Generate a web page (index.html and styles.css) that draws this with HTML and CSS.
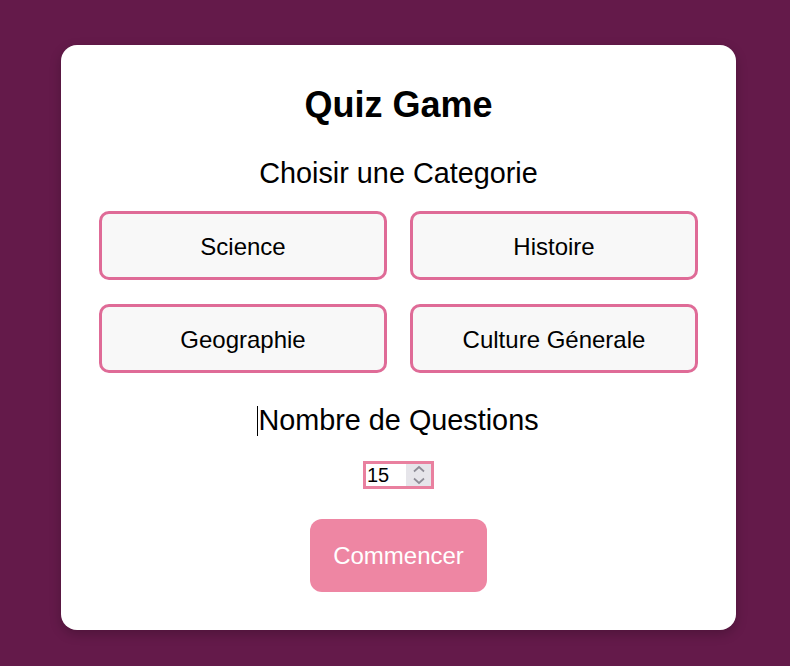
FILE: index.html
```html
<!DOCTYPE html>
<html lang="fr">
<head>
<meta charset="utf-8">
<title>Quiz Game</title>
<link rel="stylesheet" href="styles.css">
</head>
<body>
<main class="card">
  <h1 class="title">Quiz Game</h1>
  <h2 class="subtitle">Choisir une Categorie</h2>
  <div class="categories">
    <button class="cat">Science</button>
    <button class="cat">Histoire</button>
    <button class="cat">Geographie</button>
    <button class="cat">Culture Génerale</button>
  </div>
  <h2 class="subtitle subtitle-q"><span class="caret"></span>Nombre de Questions</h2>
  <div class="count-row">
    <div class="count-box">
      <input class="count" type="number" value="15" min="1" max="50">
      <div class="spin" aria-hidden="true">
        <svg width="14" height="22" viewBox="0 0 14 22">
          <path d="M2 7.5 L7 3 L12 7.5" fill="none" stroke="#8e8c96" stroke-width="1.7"/>
          <path d="M2 14.5 L7 19 L12 14.5" fill="none" stroke="#8e8c96" stroke-width="1.7"/>
        </svg>
      </div>
    </div>
  </div>
  <div class="start-row">
    <button class="start">Commencer</button>
  </div>
</main>
</body>
</html>
```

FILE: styles.css
```css
* { box-sizing: border-box; }
html, body { height: 100%; }
body {
  margin: 0;
  background: #641a4a;
  font-family: "Liberation Sans", Arial, sans-serif;
  display: flex;
  justify-content: center;
  align-items: flex-start;
  padding: 45px 0 0 7px;
}
.card {
  width: 675px;
  background: #ffffff;
  border-radius: 16px;
  padding: 39px 38px 38px;
  box-shadow: 0 4px 12px rgba(0, 0, 0, 0.22);
  display: flex;
  flex-direction: column;
  align-items: stretch;
}
.title {
  margin: 0;
  font-size: 36px;
  line-height: 41px;
  font-weight: bold;
  text-align: center;
  color: #000;
}
.subtitle {
  margin: 32px 0 0;
  font-size: 28.8px;
  line-height: 32px;
  font-weight: normal;
  text-align: center;
  color: #000;
}
.categories {
  margin-top: 22px;
  display: grid;
  grid-template-columns: 1fr 1fr;
  column-gap: 23px;
  row-gap: 24px;
}
.cat {
  height: 69px;
  background: #f8f8f8;
  border: 3px solid #df6b97;
  border-radius: 10px;
  font-family: "Liberation Sans", Arial, sans-serif;
  font-size: 24px;
  color: #000;
  padding: 2px 0 0;
}
.subtitle-q { margin-top: 31px; }
.caret {
  display: inline-block;
  width: 1px;
  height: 30px;
  background: #000;
  vertical-align: -6px;
  margin-left: -1px;
}
.count-row {
  margin-top: 25px;
  display: flex;
  justify-content: center;
}
.count-box {
  display: flex;
  width: 71px;
  height: 28px;
  border: 3px solid #e9809f;
  background: #fff;
}
.count {
  width: 40px;
  height: 22px;
  border: none;
  padding: 0 0 0 1px;
  margin: 0;
  font-family: "Liberation Sans", Arial, sans-serif;
  font-size: 20px;
  color: #000;
  outline: none;
  background: transparent;
  -moz-appearance: textfield;
  appearance: textfield;
}
.count::-webkit-inner-spin-button,
.count::-webkit-outer-spin-button {
  -webkit-appearance: none;
  margin: 0;
}
.spin {
  flex: 1;
  background: #e6e5ea;
  display: flex;
  align-items: center;
  justify-content: center;
}
.start-row {
  margin-top: 30px;
  display: flex;
  justify-content: center;
}
.start {
  height: 73px;
  padding: 0 23px;
  background: #ee86a3;
  border: none;
  border-radius: 12px;
  color: #ffffff;
  font-family: "Liberation Sans", Arial, sans-serif;
  font-size: 24px;
}
```
